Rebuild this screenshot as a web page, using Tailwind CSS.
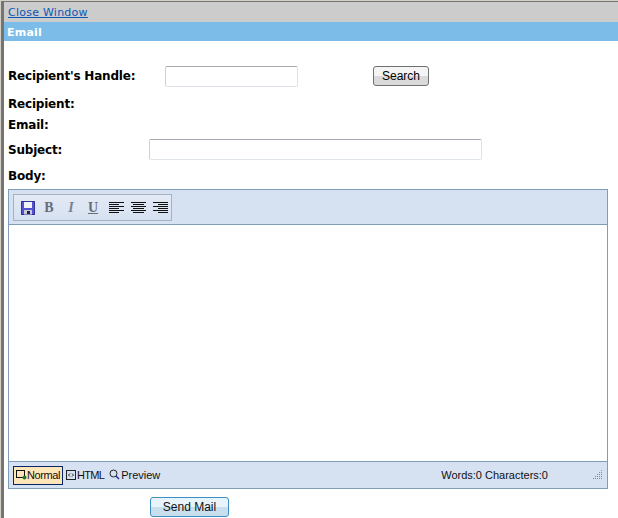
<!DOCTYPE html>
<html lang="en">
<head>
  <meta charset="UTF-8">
  <title>Email</title>
  <script src="https://cdn.jsdelivr.net/npm/@tailwindcss/browser@4"></script>
</head>
<body class="bg-white overflow-hidden font-['DejaVu_Sans',sans-serif]">
  <div class="w-[618px] h-[518px] border-t border-l border-[#d4d0c8] overflow-hidden">
  <div class="h-[517px] border-t border-l-[3px] border-[#747474] overflow-hidden">
    <!-- Title bars -->
    <div class="h-[20px] bg-[#cccccc] pl-1 pt-[1px] text-[11px] tracking-[0.25px] leading-[20px]">
      <a href="#" class="text-[#0b57b5] underline">Close Window</a>
    </div>
    <div class="h-[19px] bg-[#7bbde8] pl-[3px] pt-[1px] text-[11px] tracking-[0.2px] leading-[19px] font-bold text-white">Email</div>

    <!-- Fields -->
    <div class="pl-1 text-[12px] tracking-[-0.2px] font-bold text-black">
      <div class="flex items-center h-[21px] mt-[25px]">
        <label class="w-[157px] pb-[2px]">Recipient's Handle:</label>
        <input type="text" class="w-[133px] h-[21px] bg-white border border-[#dfe4ea] border-t-[#a9a9b4] border-l-[#d0d0d6] rounded-[2px]">
        <button class="ml-[75px] w-[56px] h-[20px] -mt-[1px] rounded-[3px] border border-[#707070] bg-[linear-gradient(#f4f4f4_50%,#dadada_50%)] font-['Liberation_Sans',sans-serif] text-[12px] tracking-normal font-normal">Search</button>
      </div>
      <div class="h-[21px] leading-[21px] mt-[7px]">Recipient:</div>
      <div class="h-[21px] leading-[21px]">Email:</div>
      <div class="flex items-center h-[21px] mt-[3px]">
        <label class="w-[141px]">Subject:</label>
        <input type="text" class="w-[333px] h-[21px] bg-white border border-[#dfe4ea] border-t-[#a9a9b4] border-l-[#d0d0d6] rounded-[2px]">
      </div>
      <div class="h-[21px] leading-[21px] mt-[6px]">Body:</div>
    </div>

    <!-- Editor -->
    <div class="ml-1 mt-[2px] w-[600px] h-[300px] border border-[#7f9db9] bg-[#d6e2f2] flex flex-col">
      <div class="h-[35px] border-b border-[#7f9db9] px-1 pt-1">
        <div class="w-[159px] h-[27px] border border-[#a4b2c4] bg-[linear-gradient(#e4ebf6,#d6e0f0)] flex items-center pl-[7px]">
          <!-- save -->
          <svg width="14" height="14" viewBox="0 0 14 14">
            <rect x="0.5" y="0.5" width="13" height="13" fill="#5252d0" stroke="#34349a"/>
            <rect x="3" y="1" width="8" height="6" fill="#f2f2fa"/>
            <rect x="3" y="9" width="8" height="4.5" fill="#c8c8d8"/>
            <rect x="6" y="10" width="3" height="3" fill="#22224a"/>
          </svg>
          <span class="ml-[6px] w-[16px] text-center font-['Liberation_Serif',serif] text-[14px] leading-none font-bold text-[#666d77]">B</span>
          <span class="ml-[6px] w-[16px] text-center font-['Liberation_Serif',serif] text-[14px] leading-none font-bold italic text-[#7b818a]">I</span>
          <span class="ml-[6px] w-[16px] text-center font-['Liberation_Serif',serif] text-[14px] leading-none font-bold underline text-[#666d77]">U</span>
          <!-- align left -->
          <svg class="ml-[8px]" width="15" height="11" viewBox="0 0 15 11" stroke="#111" stroke-width="1">
            <path d="M0 .5h15M0 2.5h10M0 4.5h15M0 6.5h10M0 8.5h15M0 10.5h10"/>
          </svg>
          <!-- align center -->
          <svg class="ml-[7px]" width="15" height="11" viewBox="0 0 15 11" stroke="#111" stroke-width="1">
            <path d="M0 .5h15M2 2.5h11M0 4.5h15M2 6.5h11M0 8.5h15M2 10.5h11"/>
          </svg>
          <!-- align right -->
          <svg class="ml-[7px]" width="15" height="11" viewBox="0 0 15 11" stroke="#111" stroke-width="1">
            <path d="M0 .5h15M5 2.5h10M0 4.5h15M5 6.5h10M0 8.5h15M5 10.5h10"/>
          </svg>
        </div>
      </div>
      <div class="flex-1 bg-white"></div>
      <div class="h-[27px] border-t border-[#7f9db9] flex items-center pl-1 pr-[4px] font-['Liberation_Sans',sans-serif] text-[11px] text-[#111]">
        <span class="flex items-center h-[19px] w-[50px] border border-[#0a246a] bg-[#ffe6b8]">
          <svg class="ml-[2px] shrink-0" width="11" height="12" viewBox="0 0 11 12" fill="none">
            <rect x="0.5" y="1.5" width="8" height="7" stroke="#111"/>
            <circle cx="8.5" cy="8.5" r="2" fill="#1c7a2c"/>
          </svg>
          <span class="tracking-[-0.4px]">Normal</span>
        </span>
        <span class="flex items-center ml-[3px]">
          <svg width="11" height="11" viewBox="0 0 11 11" fill="none" stroke="#222">
            <rect x="0.5" y="0.5" width="9" height="9"/>
            <path d="M4 3.5L2.5 5 4 6.5M6 3.5L7.5 5 6 6.5"/>
          </svg>
          <span class="tracking-[-0.7px]">HTML</span>
        </span>
        <span class="flex items-center ml-[5px]">
          <svg width="12" height="12" viewBox="0 0 12 12" fill="none" stroke="#222">
            <circle cx="4.5" cy="4.5" r="3.5"/>
            <path d="M7 7L10 10" stroke="#1a2fa0" stroke-width="1.5"/>
          </svg>
          <span>Preview</span>
        </span>
        <span class="ml-auto mr-[45px]">Words:0 Characters:0</span>
        <svg width="10" height="10" viewBox="0 0 10 10" fill="#6f8fb5">
          <path d="M8 0h1v1H8zM8 2h1v1H8zM6 2h1v1H6zM8 4h1v1H8zM6 4h1v1H6zM4 4h1v1H4zM8 6h1v1H8zM6 6h1v1H6zM4 6h1v1H4zM2 6h1v1H2zM8 8h1v1H8zM6 8h1v1H6zM4 8h1v1H4zM2 8h1v1H2zM0 8h1v1H0z"/>
        </svg>
      </div>
    </div>

    <!-- Send -->
    <div class="pl-[146px] mt-[5px]">
      <button class="w-[79px] h-[20px] rounded-[3px] border border-[#3c8fc1] bg-[linear-gradient(#e8f4fb_50%,#c9dfee_50%)] font-['Liberation_Sans',sans-serif] text-[12px] text-[#111]">Send Mail</button>
    </div>
  </div>
  </div>
</body>
</html>
